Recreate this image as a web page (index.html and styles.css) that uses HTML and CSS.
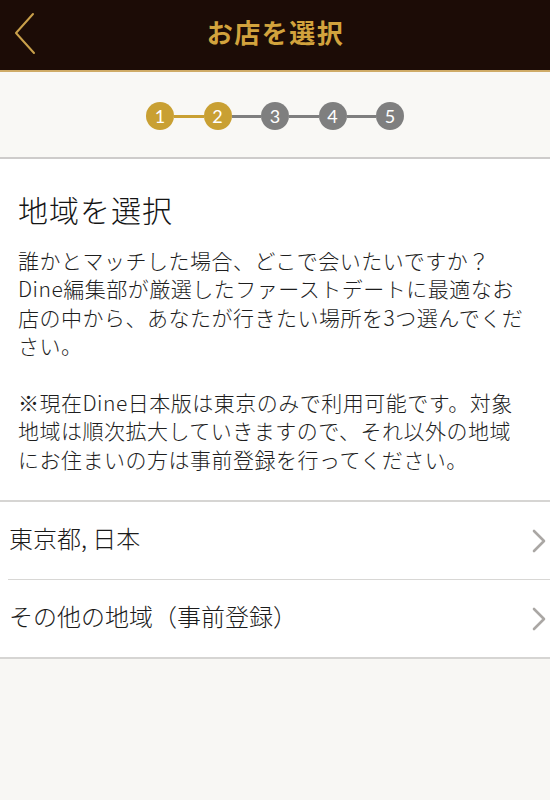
FILE: index.html
```html
<!DOCTYPE html>
<html lang="ja">
<head>
<meta charset="utf-8">
<title>お店を選択</title>
<link rel="stylesheet" href="styles.css">
</head>
<body>
<header class="topbar">
  <div class="back">
    <svg class="back-icon" width="22" height="44" viewBox="0 0 22 44"><path d="M19 2 L2 21 L20 41" fill="none" stroke="#c9a04a" stroke-width="2" stroke-linecap="round" stroke-linejoin="round"/></svg>
  </div>
  <h1 class="title">お店を選択</h1>
  <div></div>
</header>

<section class="progress">
  <span class="step done">1</span>
  <span class="bar done"></span>
  <span class="step done">2</span>
  <span class="bar"></span>
  <span class="step">3</span>
  <span class="bar"></span>
  <span class="step">4</span>
  <span class="bar"></span>
  <span class="step">5</span>
</section>

<section class="intro">
  <h2 class="heading">地域を選択</h2>
  <p class="text">誰かとマッチした場合、どこで会いたいですか？<br>Dine編集部が厳選したファーストデートに最適なお<br>店の中から、あなたが行きたい場所を3つ選んでくだ<br>さい。<br><br>※現在Dine日本版は東京のみで利用可能です。対象<br>地域は順次拡大していきますので、それ以外の地域<br>にお住まいの方は事前登録を行ってください。</p>
</section>

<ul class="list">
  <li class="row">
    <span class="row-label">東京都, 日本</span>
    <svg class="chev" width="16" height="24" viewBox="0 0 16 24"><path d="M3 2 L13 12 L3 22" fill="none" stroke="#aaa7a4" stroke-width="2.6" stroke-linecap="round" stroke-linejoin="round"/></svg>
  </li>
  <li class="row">
    <span class="row-label">その他の地域（事前登録）</span>
    <svg class="chev" width="16" height="24" viewBox="0 0 16 24"><path d="M3 2 L13 12 L3 22" fill="none" stroke="#aaa7a4" stroke-width="2.6" stroke-linecap="round" stroke-linejoin="round"/></svg>
  </li>
</ul>
</body>
</html>
```

FILE: styles.css
```css
* { box-sizing: border-box; }

html, body {
  margin: 0;
  padding: 0;
}

body {
  background: #f8f7f4;
  font-family: "Noto Sans CJK JP", "Noto Sans", sans-serif;
  color: #1b1b1b;
  width: 550px;
  min-height: 800px;
}

.topbar {
  height: 72px;
  background: #1c0c06;
  border-bottom: 2px solid #cfab67;
  display: grid;
  grid-template-columns: 70px 1fr 70px;
  align-items: center;
}

.back {
  display: flex;
  align-items: center;
  padding-left: 14px;
  padding-bottom: 2px;
}

.back-icon { display: block; }

.title {
  margin: 0;
  text-align: center;
  color: #d2a33d;
  font-size: 26px;
  font-weight: 700;
  letter-spacing: 1.5px;
  line-height: 1;
  padding-bottom: 7px;
  padding-left: 1px;
}

.progress {
  background: #f9f8f5;
  display: flex;
  justify-content: center;
  align-items: center;
  padding: 30px 0 27px 0;
  border-bottom: 2px solid #cecccb;
}

.step {
  width: 28px;
  height: 28px;
  border-radius: 50%;
  background: #7f7f7f;
  color: #fff;
  font-family: "Lato", "Open Sans", sans-serif;
  font-size: 18px;
  line-height: 28px;
  text-align: center;
  flex: none;
}

.step.done { background: #c9a033; }

.bar {
  width: 29.5px;
  height: 3px;
  background: #7f7f7f;
  flex: none;
}

.bar.done { background: #c9a033; }

.intro {
  background: #fff;
  padding: 30px 18px 27px 18px;
  border-bottom: 2px solid #d6d5d3;
}

.heading {
  margin: 0;
  font-size: 30px;
  font-weight: 300;
  letter-spacing: 1px;
  line-height: 40px;
  color: #141414;
}

.text {
  margin: 17px 0 0 0;
  font-size: 21px;
  font-weight: 300;
  letter-spacing: 0.5px;
  line-height: 28.4px;
  white-space: nowrap;
  color: #1e1e1e;
}

.list {
  list-style: none;
  margin: 0;
  padding: 0 0 0 8px;
  background: #fff;
  border-bottom: 2px solid #d6d5d3;
}

.row {
  display: flex;
  align-items: center;
  justify-content: space-between;
  height: 77px;
  padding: 0 3px 0 1px;
}

.row + .row {
  border-top: 1px solid #d8d7d5;
  height: 78px;
}

.row-label {
  font-size: 24px;
  font-weight: 300;
  line-height: 1;
  color: #1b1b1b;
  padding-bottom: 6px;
}

.chev { display: block; flex: none; }
```
